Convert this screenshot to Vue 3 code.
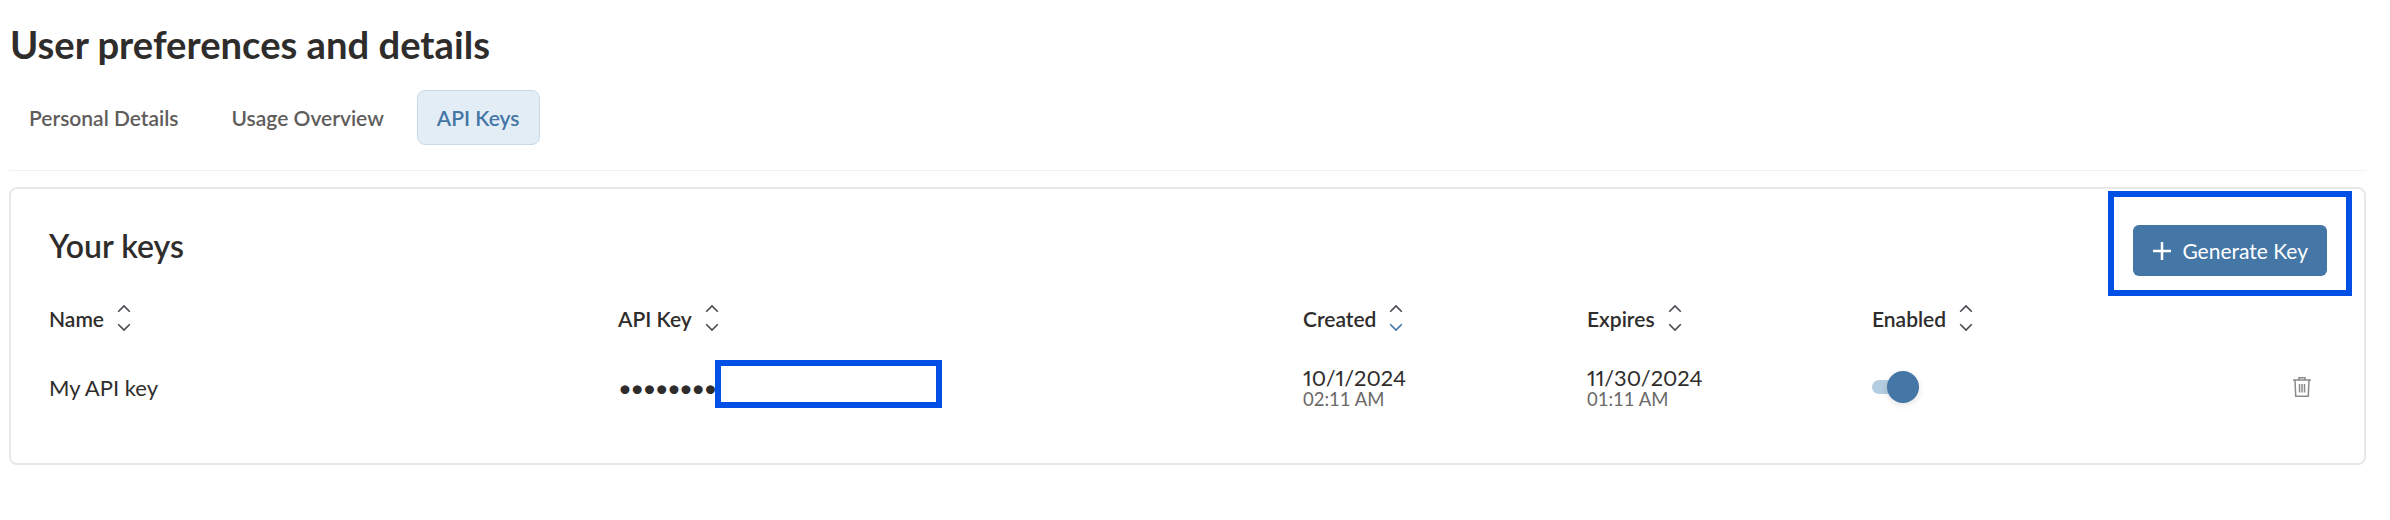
<script setup>
import { ref } from 'vue'

const tabs = ['Personal Details', 'Usage Overview', 'API Keys']
const activeTab = ref('API Keys')

const columns = [
  { label: 'Name' },
  { label: 'API Key' },
  { label: 'Created', sorted: true },
  { label: 'Expires' },
  { label: 'Enabled' }
]
</script>

<template>
  <div class="page">
    <h1 class="title">User preferences and details</h1>

    <div class="tabs">
      <button
        v-for="tab in tabs"
        :key="tab"
        class="tab"
        :class="{ active: tab === activeTab }"
      >{{ tab }}</button>
    </div>

    <div class="card">
      <div class="card-head">
        <h2 class="card-title">Your keys</h2>
        <div class="generate-wrap">
          <button class="generate">
            <svg width="18" height="18" viewBox="0 0 18 18" fill="none" stroke="#fff" stroke-width="2.5">
              <path d="M9 0v18M0 9h18" />
            </svg>
            Generate Key
          </button>
          <span class="mark generate-mark"></span>
        </div>
      </div>

      <div class="table">
        <div v-for="col in columns" :key="col.label" class="th">
          {{ col.label }}
          <svg class="sort" width="18" height="32" viewBox="0 0 18 32" fill="none" stroke-width="1.6">
            <path d="M3.200 9.800 9 4l5.800 5.800" stroke="#4a4a50" />
            <path d="M3.200 22.200 9 28l5.800-5.800" :stroke="col.sorted ? '#4476a6' : '#4a4a50'" />
          </svg>
        </div>
        <div class="th"></div>

        <div class="td">My API key</div>
        <div class="td key">
          <span class="dots">••••••••</span>
          <span class="mark key-mark"></span>
        </div>
        <div class="td date">
          <span>10/1/2024</span>
          <small>02:11 AM</small>
        </div>
        <div class="td date">
          <span>11/30/2024</span>
          <small>01:11 AM</small>
        </div>
        <div class="td">
          <span class="toggle"><span class="thumb"></span></span>
        </div>
        <div class="td actions">
          <svg width="20" height="22" viewBox="0 0 20 22" fill="none" stroke="#8a8a8e" stroke-width="1.500">
            <path d="M1 4h18M7 4V1.800h6V4M3 4l.7 16.200h12.600L17 4M7.500 8v8.500M10 8v8.500M12.500 8v8.500" />
          </svg>
        </div>
      </div>
    </div>
  </div>
</template>

<style>
html,
body {
  margin: 0;
  background: #fff;
}
</style>

<style scoped>
.page {
  width: 2390px;
  height: 520px;
  box-sizing: border-box;
  padding: 20px 24px 0 9px;
  font-family: Lato, "Liberation Sans", sans-serif;
  color: #2f2d2c;
  overflow: hidden;
}

.title {
  margin: 0 0 0 1px;
  font-size: 38.200px;
  line-height: 48px;
  font-weight: 700;
}

.tabs {
  display: flex;
  gap: 13px;
  margin-top: 22px;
  padding-bottom: 25px;
  border-bottom: 1px solid #f2f2f2;
}

.tab {
  height: 55px;
  padding: 0 19px;
  border: 1px solid transparent;
  border-radius: 8px;
  background: none;
  font: 600 21px Lato, sans-serif;
  color: #5f5d5c;
}

.tab.active {
  background: #e3edf5;
  border-color: #c9dbe9;
  color: #4476a6;
}

.card {
  margin-top: 16px;
  height: 278px;
  box-sizing: border-box;
  padding: 36px 37px 0 38px;
  border: 2px solid #e8e8e8;
  border-radius: 8px;
}

.card-head {
  display: flex;
  justify-content: space-between;
  align-items: flex-start;
}

.card-title {
  margin: 0;
  font-size: 32px;
  line-height: 42px;
  font-weight: 600;
}

.generate-wrap {
  position: relative;
}

.generate {
  display: flex;
  align-items: center;
  gap: 11px;
  height: 51px;
  padding: 0 19px 0 20px;
  border: 0;
  border-radius: 6px;
  background: #4476a6;
  color: #fff;
  font: 400 21px Lato, sans-serif;
}

.mark {
  position: absolute;
  box-sizing: border-box;
  border: 6px solid #0050e6;
  pointer-events: none;
}

.generate-mark {
  left: -25px;
  right: -25px;
  top: -34px;
  bottom: -20px;
}

.table {
  display: grid;
  grid-template-columns: 569px 685px 284px 285px 1fr 60px;
  margin-top: 22px;
}

.th {
  display: flex;
  align-items: center;
  gap: 11px;
  height: 40px;
  font-size: 21px;
  font-weight: 600;
}

.td {
  display: flex;
  align-items: center;
  height: 70px;
  margin-top: 14px;
  font-size: 22px;
}

.key {
  position: relative;
}

.dots {
  font-size: 24px;
  letter-spacing: -1.700px;
}

.key-mark {
  left: 97px;
  top: 8px;
  width: 227px;
  height: 48px;
  background: #fff;
}

.date {
  flex-direction: column;
  align-items: flex-start;
  justify-content: center;
  font-size: 21.800px;
  font-variant-numeric: proportional-nums;
  line-height: 24px;
}

.date small {
  font-size: 18.500px;
  font-variant-numeric: tabular-nums;
  line-height: 19px;
  color: #6b6968;
}

.toggle {
  position: relative;
  display: block;
  width: 32px;
  height: 14px;
  border-radius: 7px;
  background: #b5cde1;
}

.thumb {
  position: absolute;
  left: 15px;
  top: -9px;
  width: 32px;
  height: 32px;
  border-radius: 50%;
  background: #4476a6;
  box-shadow: 0 2px 6px rgba(0, 0, 0, 0.12);
}

.actions {
  justify-content: flex-end;
  padding-right: 15px;
}
</style>
